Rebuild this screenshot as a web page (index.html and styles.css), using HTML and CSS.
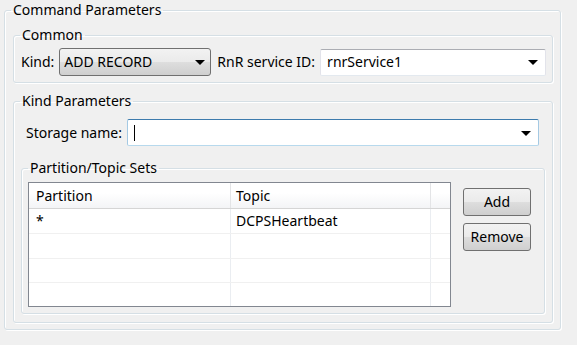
FILE: index.html
```html
<!DOCTYPE html>
<html>
<head>
<meta charset="utf-8">
<link rel="stylesheet" href="styles.css">
</head>
<body>
<fieldset class="group outer">
  <legend>Command Parameters</legend>
  <fieldset class="group common">
    <legend>Common</legend>
    <div class="row">
      <span class="label">Kind:</span>
      <div class="combo ro">
        <span class="val">ADD RECORD</span>
        <span class="arrow"></span>
      </div>
      <span class="label rnr">RnR service ID:</span>
      <div class="combo edit">
        <span class="val">rnrService1</span>
        <span class="arrow"></span>
      </div>
    </div>
  </fieldset>
  <fieldset class="group kind">
    <legend>Kind Parameters</legend>
    <div class="row storage">
      <span class="label">Storage name:</span>
      <div class="combo edit focus">
        <span class="caret"></span>
        <span class="arrow"></span>
      </div>
    </div>
    <fieldset class="group sets">
      <legend>Partition/Topic Sets</legend>
      <div class="sets-body">
        <div class="table">
          <div class="tr head">
            <div class="c c1">Partition</div>
            <div class="c c2">Topic</div>
            <div class="c c3"></div>
          </div>
          <div class="tr r24">
            <div class="c c1">*</div>
            <div class="c c2">DCPSHeartbeat</div>
            <div class="c c3"></div>
          </div>
          <div class="tr r24">
            <div class="c c1"></div>
            <div class="c c2"></div>
            <div class="c c3"></div>
          </div>
          <div class="tr r23">
            <div class="c c1"></div>
            <div class="c c2"></div>
            <div class="c c3"></div>
          </div>
          <div class="tr r23 last">
            <div class="c c1"></div>
            <div class="c c2"></div>
            <div class="c c3"></div>
          </div>
        </div>
        <div class="buttons">
          <button class="btn">Add</button>
          <button class="btn">Remove</button>
        </div>
      </div>
    </fieldset>
  </fieldset>
</fieldset>
</body>
</html>
```
FILE: styles.css
```css
html, body {
  margin: 0;
  padding: 0;
  background: #f0f0f0;
}
body {
  font-family: "Noto Sans", "Open Sans", sans-serif;
  font-size: 14px;
  color: #000;
  width: 577px;
  height: 345px;
  overflow: hidden;
}
.group {
  margin: 0;
  border: 1px solid #d5dfe5;
  border-radius: 3px;
  box-sizing: border-box;
  min-width: 0;
  box-shadow: inset 1px 1px 0 #fff, 1px 1px 0 #fff;
}
.group > legend {
  padding: 0 2px;
  line-height: 20px;
  height: 20px;
  color: #000;
}
.outer {
  width: 557px;
  margin-left: 4px;
  padding: 5px 7px 6px 8px;
}
.outer > legend {
  margin-left: -2px;
}
.common {
  padding: 3px 6px 6px 6px;
}
.kind {
  margin-top: 8px;
  padding: 8px 7px 8px 7px;
}
.kind > legend {
  margin-left: -1px;
}
.sets {
  margin-top: 12px;
  padding: 4px 13px 6px 6px;
}
.row {
  display: flex;
  align-items: center;
  height: 28px;
}
.label {
  white-space: nowrap;
  line-height: 18px;
}
.row > .label:first-child {
  margin-left: 1px;
}
.combo {
  position: relative;
  box-sizing: border-box;
  height: 28px;
  display: flex;
  align-items: center;
}
.combo .val {
  line-height: 18px;
  white-space: nowrap;
}
.combo.ro {
  width: 152px;
  margin-left: 5px;
  border: 1px solid #707070;
  border-radius: 3px;
  background: linear-gradient(#f2f2f2 0%, #ebebeb 48%, #dddddd 52%, #cfcfcf 100%);
  padding-left: 4px;
}
.rnr {
  margin-left: 6px;
}
.combo.edit {
  flex: 1;
  margin-left: 5px;
  height: 27px;
  border: 1px solid #abadb3;
  border-left-color: #e2e3ea;
  border-right-color: #e2e3ea;
  border-bottom-color: #e3e9ef;
  border-radius: 2px;
  background: #fff;
  padding-left: 6px;
}
.combo.focus {
  border-color: #3d7bad;
  border-left-color: #a4c9e3;
  border-right-color: #a4c9e3;
  border-bottom-color: #b7d9ed;
}
.arrow {
  position: absolute;
  right: 6px;
  top: 50%;
  margin-top: -2px;
  width: 0;
  height: 0;
  border-left: 5px solid transparent;
  border-right: 5px solid transparent;
  border-top: 5px solid #000;
}
.combo.ro .arrow {
  right: 5px;
}
.combo.edit .arrow {
  right: 7px;
}
.caret {
  width: 1px;
  height: 16px;
  background: #000;
}
.storage {
  margin: 0 6px 0 4px;
  height: 27px;
}
.sets-body {
  display: flex;
  align-items: flex-start;
}
.table {
  width: 424px;
  height: 125px;
  box-sizing: border-box;
  border: 1px solid #828790;
  background: #fff;
}
.tr {
  display: flex;
  height: 24px;
  border-bottom: 1px solid #f0f0f0;
}
.tr.r23 {
  height: 23px;
}
.tr.last {
  border-bottom: none;
}
.tr.head {
  height: 25px;
  border-bottom: 1px solid #d5d5d5;
  background: linear-gradient(#ffffff 0%, #ffffff 40%, #f3f4f6 100%);
}
.c {
  box-sizing: border-box;
  padding-left: 7px;
  line-height: 24px;
  white-space: nowrap;
  border-right: 1px solid #eaedf1;
}
.c1 { width: 202px; }
.c2 { width: 200px; padding-left: 5px; }
.c3 { flex: 1; border-right: none; }
.head .c {
  line-height: 25px;
}
.head .c1, .head .c2 {
  border-right-color: #e3e4e6;
}
.buttons {
  margin-left: 12px;
  margin-top: 6px;
  display: flex;
  flex-direction: column;
  gap: 7px;
}
.btn {
  width: 68px;
  height: 28px;
  box-sizing: border-box;
  border: 1px solid #707070;
  border-radius: 3px;
  background: linear-gradient(#f2f2f2 0%, #ebebeb 48%, #dddddd 52%, #cfcfcf 100%);
  font-family: inherit;
  font-size: 14px;
  color: #000;
  padding: 0;
  line-height: 18px;
}
```
